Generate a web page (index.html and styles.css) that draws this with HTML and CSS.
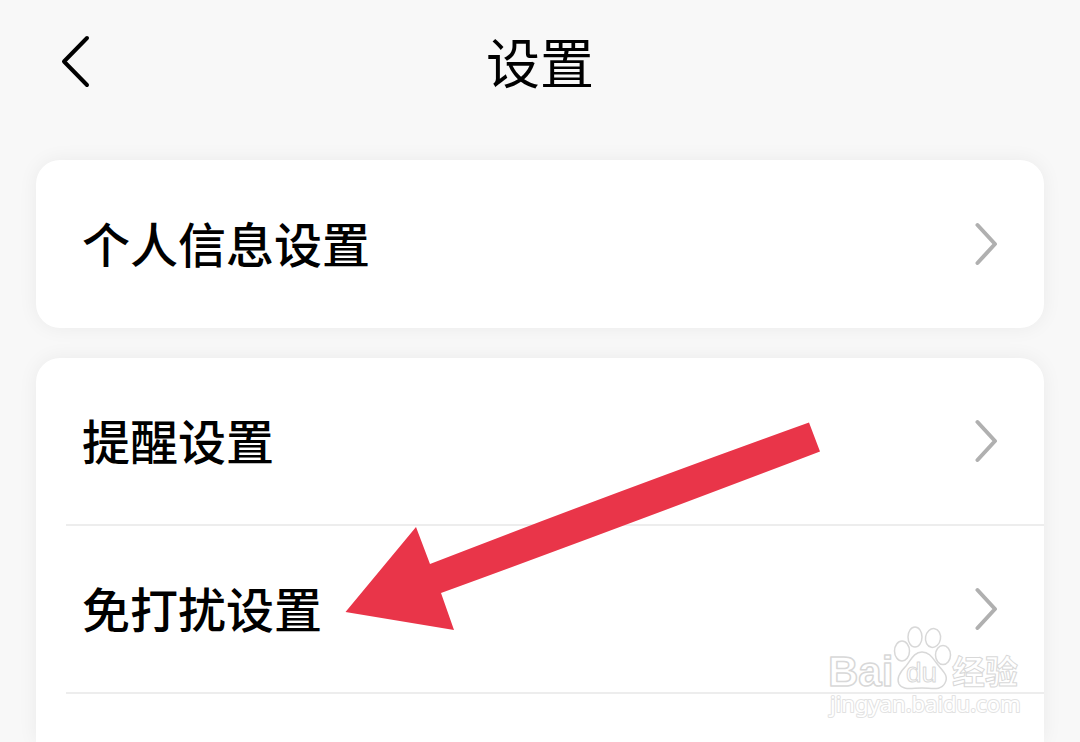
FILE: index.html
```html
<!DOCTYPE html>
<html lang="zh-CN">
<head>
  <meta charset="UTF-8" />
  <meta name="viewport" content="width=device-width, initial-scale=1.0"/>
  <title>设置</title>
  <link rel="stylesheet" href="styles.css">
</head>

<body>
  <header class="topbar">
    <button class="back" type="button" aria-label="返回">
      <svg width="32" height="56" viewBox="0 0 32 56"><path d="M27 5 4 28.500 27 52" /></svg>
    </button>
    <h1>设置</h1>
  </header>

  <main class="settings">
    <section class="card">
      <a class="row" href="#profile">
        <span>个人信息设置</span>
        <svg class="chevron" width="24" height="44" viewBox="0 0 24 44"><path d="M2.500 3 20 22 2.500 41" /></svg>
      </a>
    </section>

    <section class="card card-last">
      <a class="row" href="#remind">
        <span>提醒设置</span>
        <svg class="chevron" width="24" height="44" viewBox="0 0 24 44"><path d="M2.500 3 20 22 2.500 41" /></svg>
      </a>
      <a class="row" href="#disturb">
        <span>免打扰设置</span>
        <svg class="chevron" width="24" height="44" viewBox="0 0 24 44"><path d="M2.500 3 20 22 2.500 41" /></svg>
      </a>

      <svg class="arrow" width="480" height="210" viewBox="0 0 480 210">
        <path d="M5.500 192 76 107 90 144Q270 74 469 2.500L480 31.500Q290 104 101 173L114 210Z" />
      </svg>

      <svg class="watermark" width="204" height="100" viewBox="0 0 204 100">
        <text class="latin" x="4" y="64">Bai</text>
        <ellipse cx="78" cy="29" rx="7.500" ry="10" />
        <ellipse cx="91" cy="15" rx="7" ry="10" />
        <ellipse cx="109" cy="16" rx="7.500" ry="9.500" transform="rotate(10 109 16)" />
        <ellipse cx="119" cy="33" rx="7.500" ry="9.500" />
        <path d="M98 30C90 30 87 38 82 44 76 50 72 56 75 62 79 69 88 66 98 66 108 66 117 69 121 61 125 54 119 49 114 43 109 37 106 30 98 30Z" />
        <text class="du" x="82" y="60">du</text>
        <text class="cjk" x="128" y="62">经验</text>
        <text class="site" x="6" y="90">jingyan.baidu.com</text>
      </svg>
    </section>
  </main>
</body>
</html>
```

FILE: styles.css
```css
* { box-sizing:border-box; }
body { margin:0; height:100vh; overflow:hidden; display:flex; flex-direction:column; font-family:'Noto Sans CJK SC',sans-serif; background:#f8f8f8; color:#000; }
svg { display:block; fill:none; stroke-linecap:round; stroke-linejoin:round; }

.topbar { display:grid; grid-template-columns:1fr auto 1fr; align-items:center; height:122px; padding:0 60px; flex:none; }
.topbar h1 { margin:0; font-size:54px; font-weight:400; line-height:80px; }
.back { justify-self:start; padding:0; border:none; background:none; cursor:pointer; }
.back path { stroke:#000; stroke-width:4; }

.settings { flex:1; display:flex; flex-direction:column; gap:30px; padding:38px 36px 0; }
.card { position:relative; background:#fff; border-radius:24px; box-shadow:0 0 20px rgba(0,0,0,0.06); }
.card-last { flex:1; border-radius:24px 24px 0 0; }

.row { display:flex; justify-content:space-between; align-items:center; height:168px; margin-left:30px; padding:0 45px 0 16px; color:#000; font-size:48px; font-weight:500; line-height:72px; text-decoration:none; }
.row span { padding-bottom:4px; }
.card-last .row { border-bottom:2px solid #ededed; }
.chevron path { stroke:#b0b0b0; stroke-width:4; }

.arrow { position:absolute; left:304px; top:62px; fill:#e93549; pointer-events:none; }

.watermark { position:absolute; left:788px; top:264px; pointer-events:none; fill:#fff; stroke:#d8d8d8; stroke-width:1.5; }
.latin { font:bold 42px 'Liberation Sans',sans-serif; }
.du { font:28px 'Liberation Sans',sans-serif; stroke-width:1; }
.cjk { font:bold 33px 'Noto Sans CJK SC',sans-serif; stroke-width:1; }
.site { font:22px 'Noto Sans',sans-serif; stroke:#e2e2e2; stroke-width:2; paint-order:stroke; }
```
